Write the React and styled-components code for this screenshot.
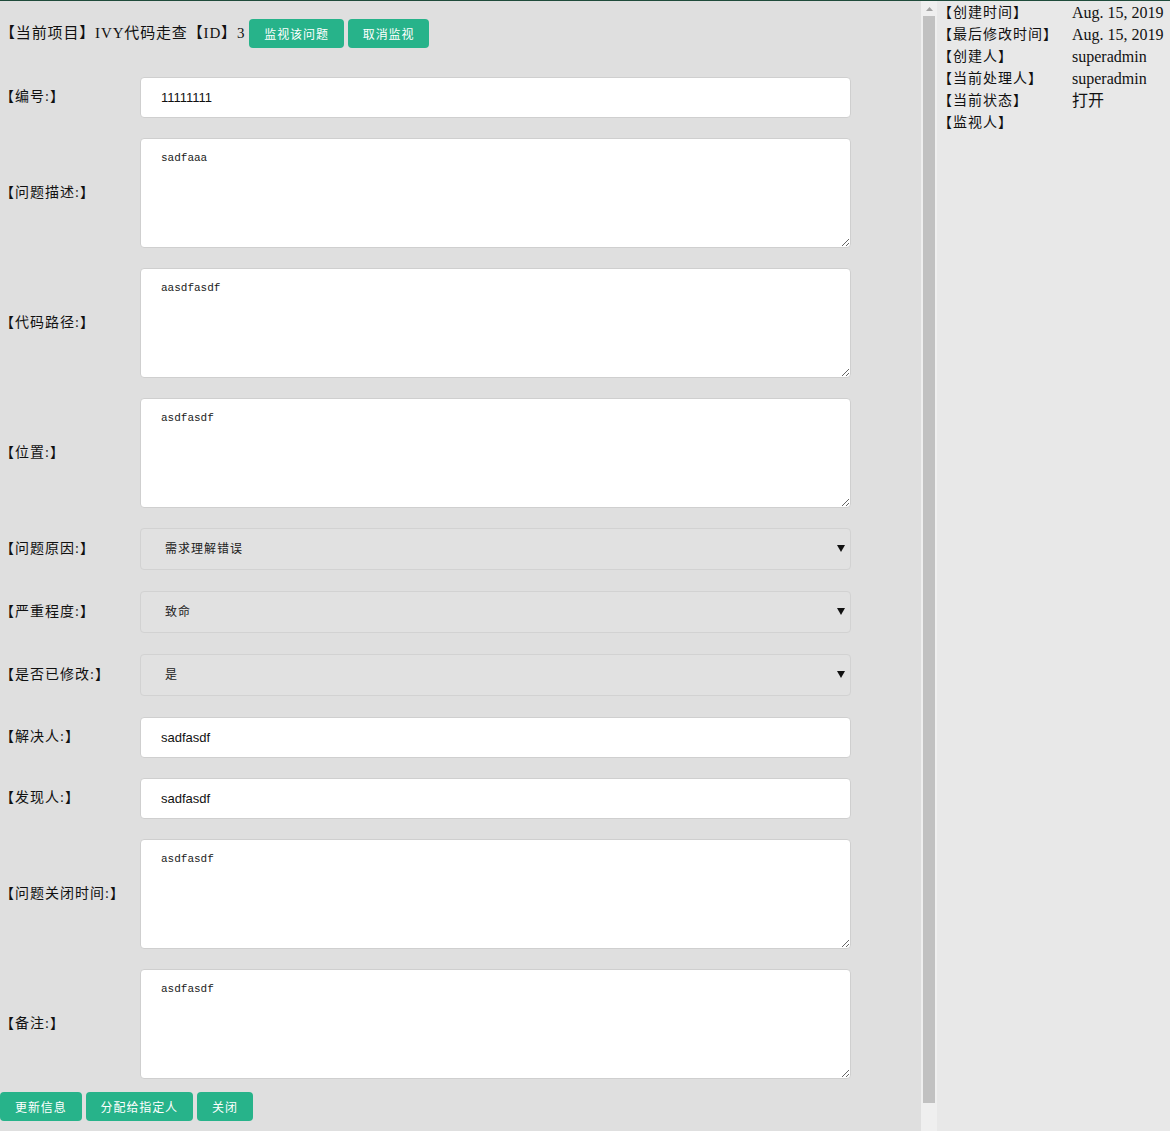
import React from 'react';
import styled, { createGlobalStyle } from 'styled-components';

const GlobalStyle = createGlobalStyle`
  html, body {
    margin: 0;
    padding: 0;
  }
  body {
    border-top: 1px solid #1f4b3b;
    font-family: "Liberation Serif", "Noto Sans CJK SC", serif;
    color: #111;
    overflow: hidden;
  }
`;

const cjk = `"Liberation Serif", "Noto Sans CJK SC", serif`;

const Page = styled.div`
  display: flex;
  height: 1130px;
`;

const Main = styled.div`
  width: 921px;
  flex-shrink: 0;
  background: #dfdfdf;
  overflow: hidden;
`;

const ScrollBar = styled.div`
  width: 16px;
  flex-shrink: 0;
  display: flex;
  flex-direction: column;
  background: #efefef;
`;

const ScrollArrow = styled.div`
  height: 15px;
  display: flex;
  align-items: center;
  justify-content: center;
`;

const ScrollThumb = styled.div`
  flex: 1;
  margin: 0 2px 28px;
  background: #c1c1c1;
`;

const Content = styled.div`
  width: 921px;
  padding-bottom: 24px;
`;

const TitleBar = styled.div`
  display: flex;
  align-items: center;
  padding-top: 18px;
  font-family: ${cjk};
  font-size: 15px;
  letter-spacing: 0.85px;
`;

const Title = styled.span`
  margin-right: 4px;
  position: relative;
  top: -2px;
`;

const Button = styled.button`
  height: 29px;
  padding: 0 15px;
  margin-right: 4px;
  border: none;
  border-radius: 4px;
  background: #27b38a;
  color: #fff;
  font-family: ${cjk};
  font-size: 12px;
  letter-spacing: 0.9px;
  cursor: pointer;
`;

const Form = styled.div`
  display: grid;
  grid-template-columns: 140px 711px;
  margin-top: 29px;
`;

const Label = styled.div`
  display: flex;
  align-items: center;
  padding-bottom: 5px;
  font-family: ${cjk};
  font-size: 14px;
  letter-spacing: 1px;
  margin-bottom: ${p => p.$gap}px;
`;

const FieldBox = styled.div`
  position: relative;
  margin-bottom: ${p => p.$gap}px;
`;

const Input = styled.input`
  display: block;
  box-sizing: border-box;
  width: 100%;
  height: 41px;
  padding: 0 20px;
  border: 1px solid #cfcfcf;
  border-radius: 4px;
  background: #fff;
  font-family: "Liberation Sans", Arial, sans-serif;
  font-size: 13px;
  color: #111;
  outline: none;
`;

const TextArea = styled.textarea`
  display: block;
  box-sizing: border-box;
  width: 100%;
  height: 110px;
  padding: 13px 20px;
  border: 1px solid #cfcfcf;
  border-radius: 4px;
  background: #fff;
  font-family: "Liberation Mono", monospace;
  font-size: 11px;
  color: #1a1a1a;
  outline: none;
`;

const Select = styled.select`
  display: block;
  box-sizing: border-box;
  width: 100%;
  height: 42px;
  padding: 0 24px;
  border: 1px solid #d2d2d2;
  border-radius: 4px;
  background: #e1e1e1;
  appearance: none;
  font-family: ${cjk};
  font-size: 12px;
  letter-spacing: 1px;
  color: #222;
  outline: none;
`;

const Caret = styled.svg`
  position: absolute;
  right: 6px;
  top: 17px;
  pointer-events: none;
`;

const Actions = styled.div`
  display: flex;
  margin-top: 13px;
`;

const Side = styled.div`
  flex: 1;
  background: #e8e8e8;
  padding: 1px 0 0 1px;
`;

const InfoTable = styled.table`
  border-collapse: collapse;
`;

const InfoRow = styled.tr`
  height: 22px;
`;

const InfoKey = styled.td`
  width: 134px;
  padding: 0;
  line-height: 22px;
  font-family: ${cjk};
  font-size: 14px;
  letter-spacing: 1px;
  white-space: nowrap;
  vertical-align: middle;
`;

const InfoValue = styled.td`
  padding: 0;
  line-height: 22px;
  font-family: ${cjk};
  font-size: 16px;
  vertical-align: middle;
  white-space: nowrap;
`;

const fields = [
  { label: '【编号:】', type: 'input', value: '11111111' },
  { label: '【问题描述:】', type: 'text', value: 'sadfaaa' },
  { label: '【代码路径:】', type: 'text', value: 'aasdfasdf' },
  { label: '【位置:】', type: 'text', value: 'asdfasdf' },
  { label: '【问题原因:】', type: 'select', value: '需求理解错误', gap: 21 },
  { label: '【严重程度:】', type: 'select', value: '致命', gap: 21 },
  { label: '【是否已修改:】', type: 'select', value: '是', gap: 21 },
  { label: '【解决人:】', type: 'input', value: 'sadfasdf' },
  { label: '【发现人:】', type: 'input', value: 'sadfasdf' },
  { label: '【问题关闭时间:】', type: 'text', value: 'asdfasdf' },
  { label: '【备注:】', type: 'text', value: 'asdfasdf', gap: 0 },
];

const info = [
  ['【创建时间】', 'Aug. 15, 2019'],
  ['【最后修改时间】', 'Aug. 15, 2019'],
  ['【创建人】', 'superadmin'],
  ['【当前处理人】', 'superadmin'],
  ['【当前状态】', '打开'],
  ['【监视人】', ''],
];

const Field = ({ type, value }) => {
  if (type === 'input') return <Input defaultValue={value} />;
  if (type === 'select')
    return (
      <>
        <Select defaultValue={value}>
          <option>{value}</option>
        </Select>
        <Caret width="8" height="7" viewBox="0 0 8 7">
          <path d="M0 0 H8 L4 7 Z" fill="#111" />
        </Caret>
      </>
    );
  return <TextArea defaultValue={value} />;
};

const App = () => {
  return (
    <>
      <GlobalStyle />
      <Page>
        <Main>
          <Content>
            <TitleBar>
              <Title>【当前项目】IVY代码走查【ID】3</Title>
              <Button>监视该问题</Button>
              <Button>取消监视</Button>
            </TitleBar>
            <Form>
              {fields.map(f => {
                const gap = f.gap === undefined ? 20 : f.gap;
                return (
                  <React.Fragment key={f.label}>
                    <Label $gap={gap}>{f.label}</Label>
                    <FieldBox $gap={gap}>
                      <Field type={f.type} value={f.value} />
                    </FieldBox>
                  </React.Fragment>
                );
              })}
            </Form>
            <Actions>
              <Button>更新信息</Button>
              <Button>分配给指定人</Button>
              <Button>关闭</Button>
            </Actions>
          </Content>
        </Main>
        <ScrollBar>
          <ScrollArrow>
            <svg width="7" height="4" viewBox="0 0 7 4">
              <path d="M0 4 L3.5 0 L7 4 Z" fill="#a3a3a3" />
            </svg>
          </ScrollArrow>
          <ScrollThumb />
        </ScrollBar>
        <Side>
          <InfoTable>
            <tbody>
              {info.map(([k, v]) => (
                <InfoRow key={k}>
                  <InfoKey>{k}</InfoKey>
                  <InfoValue>{v}</InfoValue>
                </InfoRow>
              ))}
            </tbody>
          </InfoTable>
        </Side>
      </Page>
    </>
  );
};

export default App;
